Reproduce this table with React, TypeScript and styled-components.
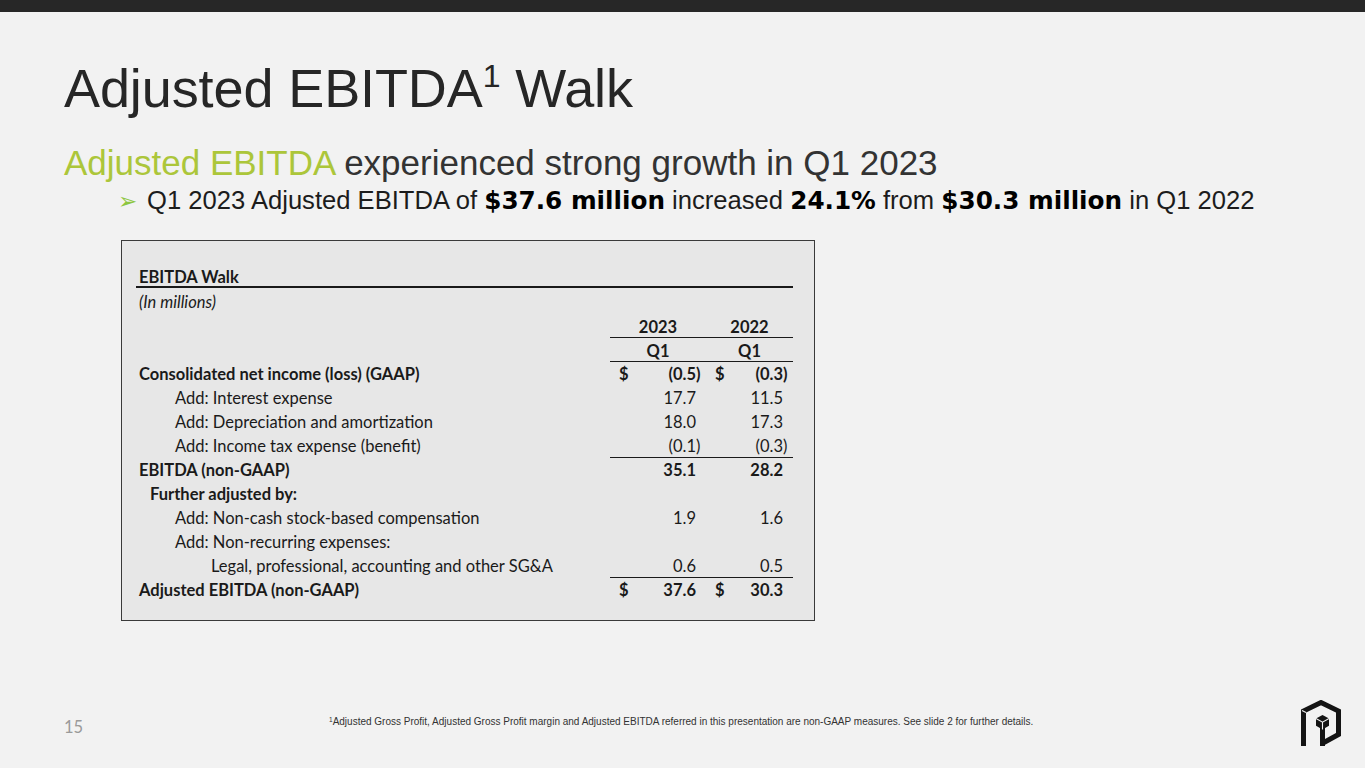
import styled, { createGlobalStyle } from "styled-components"

const GlobalStyle = createGlobalStyle`
    html, body {
        margin: 0;
        padding: 0;
        background: #f2f2f2;
    }
`

const Slide = styled.div`
    width: 1365px;
    height: 768px;
    display: flex;
    flex-direction: column;
    background: #f2f2f2;
    overflow: hidden;
    font-family: "Liberation Sans", Arial, sans-serif;
`

const TopBar = styled.div`
    height: 12px;
    background: #272727;
    flex-shrink: 0;
`

const Content = styled.div`
    padding-left: 64px;
    display: flex;
    flex-direction: column;
`

const Title = styled.h1`
    margin: 46px 0 0;
    font-size: 54px;
    line-height: 60px;
    font-weight: 400;
    color: #262626;
    letter-spacing: -0.1px;
    sup {
        font-size: 32px;
        vertical-align: 20px;
        line-height: 0;
    }
`

const Subtitle = styled.h2`
    margin: 25px 0 0;
    font-size: 35px;
    line-height: 40px;
    font-weight: 400;
    color: #333333;
`

const Green = styled.span`
    color: #acc63a;
`

const Bullet = styled.div`
    margin: 2px 0 0 54px;
    display: flex;
    align-items: baseline;
    font-size: 25.6px;
    line-height: 30px;
    color: #1c1c1c;
`

const Arrow = styled.span`
    color: #8dc63f;
    font-family: "DejaVu Sans", sans-serif;
    font-size: 23px;
    width: 29px;
`

const Strong = styled.b`
    font-family: "DejaVu Sans", sans-serif;
    font-weight: 700;
    font-size: 24.7px;
    color: #000;
`

const TableBox = styled.div`
    margin: 24px 0 0 57px;
    width: 694px;
    height: 381px;
    border: 1px solid #3a3a3a;
    background: #e7e7e7;
    padding: 23px 21px 0 14px;
    box-sizing: border-box;
    font-family: Lato, "Open Sans", sans-serif;
    font-size: 16.5px;
    color: #1a1a1a;
`

const TableTitle = styled.div`
    height: 24px;
    padding: 3px 0 0 3px;
    line-height: 21px;
    font-weight: 700;
    border-bottom: 2px solid #1a1a1a;
    box-sizing: border-box;
`

const Row = styled.div`
    display: grid;
    grid-template-columns: 1fr 96px 87px;
    height: 24px;
`

const Label = styled.div<{ $indent?: number; $bold?: boolean; $italic?: boolean }>`
    padding: 4px 0 0 ${(p) => 3 + (p.$indent || 0)}px;
    line-height: 21px;
    font-weight: ${(p) => (p.$bold ? 700 : 400)};
    font-style: ${(p) => (p.$italic ? "italic" : "normal")};
    white-space: nowrap;
`

const HeadCell = styled.div<{ $line?: boolean }>`
    text-align: center;
    font-weight: 700;
    padding-top: 5px;
    line-height: 20px;
    border-bottom: ${(p) => (p.$line ? "1.5px solid #1a1a1a" : "none")};
    box-sizing: border-box;
`

const ValueCell = styled.div<{ $bold?: boolean; $line?: boolean }>`
    display: flex;
    justify-content: space-between;
    padding: 4px 5px 0 9px;
    line-height: 21px;
    font-weight: ${(p) => (p.$bold ? 700 : 400)};
    border-bottom: ${(p) => (p.$line ? "1.5px solid #1a1a1a" : "none")};
    box-sizing: border-box;
`

const Paren = styled.span`
    display: inline-block;
    width: 5px;
`

const Footer = styled.div`
    margin-top: auto;
    margin-bottom: 22px;
    display: flex;
    align-items: center;
    padding: 0 24px 0 64px;
    height: 46px;
`

const PageNum = styled.div`
    width: 265px;
    font-family: Lato, "Open Sans", sans-serif;
    font-size: 16.5px;
    color: #9a9a9a;
    margin-top: 8px;
`

const Footnote = styled.div`
    font-size: 10px;
    color: #333;
    margin-top: -4px;
    sup {
        font-size: 6.5px;
        vertical-align: 3px;
        line-height: 0;
    }
`

const Spacer = styled.div`
    flex: 1;
`

type Cell = { v: string; dollar?: boolean }

interface RowData {
    label: string
    indent?: number
    bold?: boolean
    cells?: [Cell, Cell]
    line?: boolean
}

const rows: RowData[] = [
    { label: "Consolidated net income (loss) (GAAP)", bold: true, cells: [{ v: "(0.5)", dollar: true }, { v: "(0.3)", dollar: true }] },
    { label: "Add: Interest expense", indent: 36, cells: [{ v: "17.7" }, { v: "11.5" }] },
    { label: "Add: Depreciation and amortization", indent: 36, cells: [{ v: "18.0" }, { v: "17.3" }] },
    { label: "Add: Income tax expense (benefit)", indent: 36, cells: [{ v: "(0.1)" }, { v: "(0.3)" }], line: true },
    { label: "EBITDA (non-GAAP)", bold: true, cells: [{ v: "35.1" }, { v: "28.2" }] },
    { label: "Further adjusted by:", bold: true, indent: 11 },
    { label: "Add: Non-cash stock-based compensation", indent: 36, cells: [{ v: "1.9" }, { v: "1.6" }] },
    { label: "Add: Non-recurring expenses:", indent: 36 },
    { label: "Legal, professional, accounting and other SG&A", indent: 72, cells: [{ v: "0.6" }, { v: "0.5" }], line: true },
    { label: "Adjusted EBITDA (non-GAAP)", bold: true, cells: [{ v: "37.6", dollar: true }, { v: "30.3", dollar: true }] },
]

function Value({ cell, bold, line }: { cell?: Cell; bold?: boolean; line?: boolean }) {
    if (!cell) return <ValueCell $line={line} />
    const neg = cell.v.endsWith(")")
    const num = neg ? cell.v.slice(0, -1) : cell.v
    return (
        <ValueCell $bold={bold} $line={line}>
            <span>{cell.dollar ? "$" : ""}</span>
            <span>
                {num}
                <Paren>{neg ? ")" : ""}</Paren>
            </span>
        </ValueCell>
    )
}

function Logo() {
    return (
        <svg width="40" height="46" viewBox="0 0 40 46">
            {/* hexagon outline forming the P */}
            <path d="M2.5 46 V11 L20 2.5 L37.5 11 V34.5 L22 43" fill="none" stroke="#141414" strokeWidth="5" strokeLinejoin="miter" />
            {/* white notch at the upper left corner */}
            <path d="M5 12.5 L1 10.5" stroke="#f2f2f2" strokeWidth="1.2" />
            {/* stem under the cube */}
            <path d="M19 26 H24 V46 H19 Z" fill="#141414" />
            {/* small cube */}
            <path d="M21.5 15 L28 18.6 L28 25.8 L21.5 29.4 L15 25.8 L15 18.6 Z" fill="#141414" />
            <path d="M15 18.6 L21.5 22.2 L28 18.6 M21.5 22.2 V29.4" fill="none" stroke="#f2f2f2" strokeWidth="1.1" />
        </svg>
    )
}

export default function App() {
    return (
        <Slide>
            <GlobalStyle />
            <TopBar />
            <Content>
                <Title>
                    Adjusted EBITDA<sup>1</sup> Walk
                </Title>
                <Subtitle>
                    <Green>Adjusted EBITDA</Green> experienced strong growth in Q1 2023
                </Subtitle>
                <Bullet>
                    <Arrow>➢</Arrow>
                    <span>
                        Q1 2023 Adjusted EBITDA of <Strong>$37.6 million</Strong> increased <Strong>24.1%</Strong> from{" "}
                        <Strong>$30.3 million</Strong> in Q1 2022
                    </span>
                </Bullet>
                <TableBox>
                    <TableTitle>EBITDA Walk</TableTitle>
                    <Row>
                        <Label $italic>(In millions)</Label>
                    </Row>
                    <Row>
                        <div />
                        <HeadCell $line>2023</HeadCell>
                        <HeadCell $line>2022</HeadCell>
                    </Row>
                    <Row>
                        <div />
                        <HeadCell $line>Q1</HeadCell>
                        <HeadCell $line>Q1</HeadCell>
                    </Row>
                    {rows.map((r) => (
                        <Row key={r.label}>
                            <Label $indent={r.indent} $bold={r.bold}>
                                {r.label}
                            </Label>
                            <Value cell={r.cells?.[0]} bold={r.bold} line={r.line} />
                            <Value cell={r.cells?.[1]} bold={r.bold} line={r.line} />
                        </Row>
                    ))}
                </TableBox>
            </Content>
            <Footer>
                <PageNum>15</PageNum>
                <Footnote>
                    <sup>1</sup>Adjusted Gross Profit, Adjusted Gross Profit margin and Adjusted EBITDA referred in this
                    presentation are non-GAAP measures. See slide 2 for further details.
                </Footnote>
                <Spacer />
                <Logo />
            </Footer>
        </Slide>
    )
}
